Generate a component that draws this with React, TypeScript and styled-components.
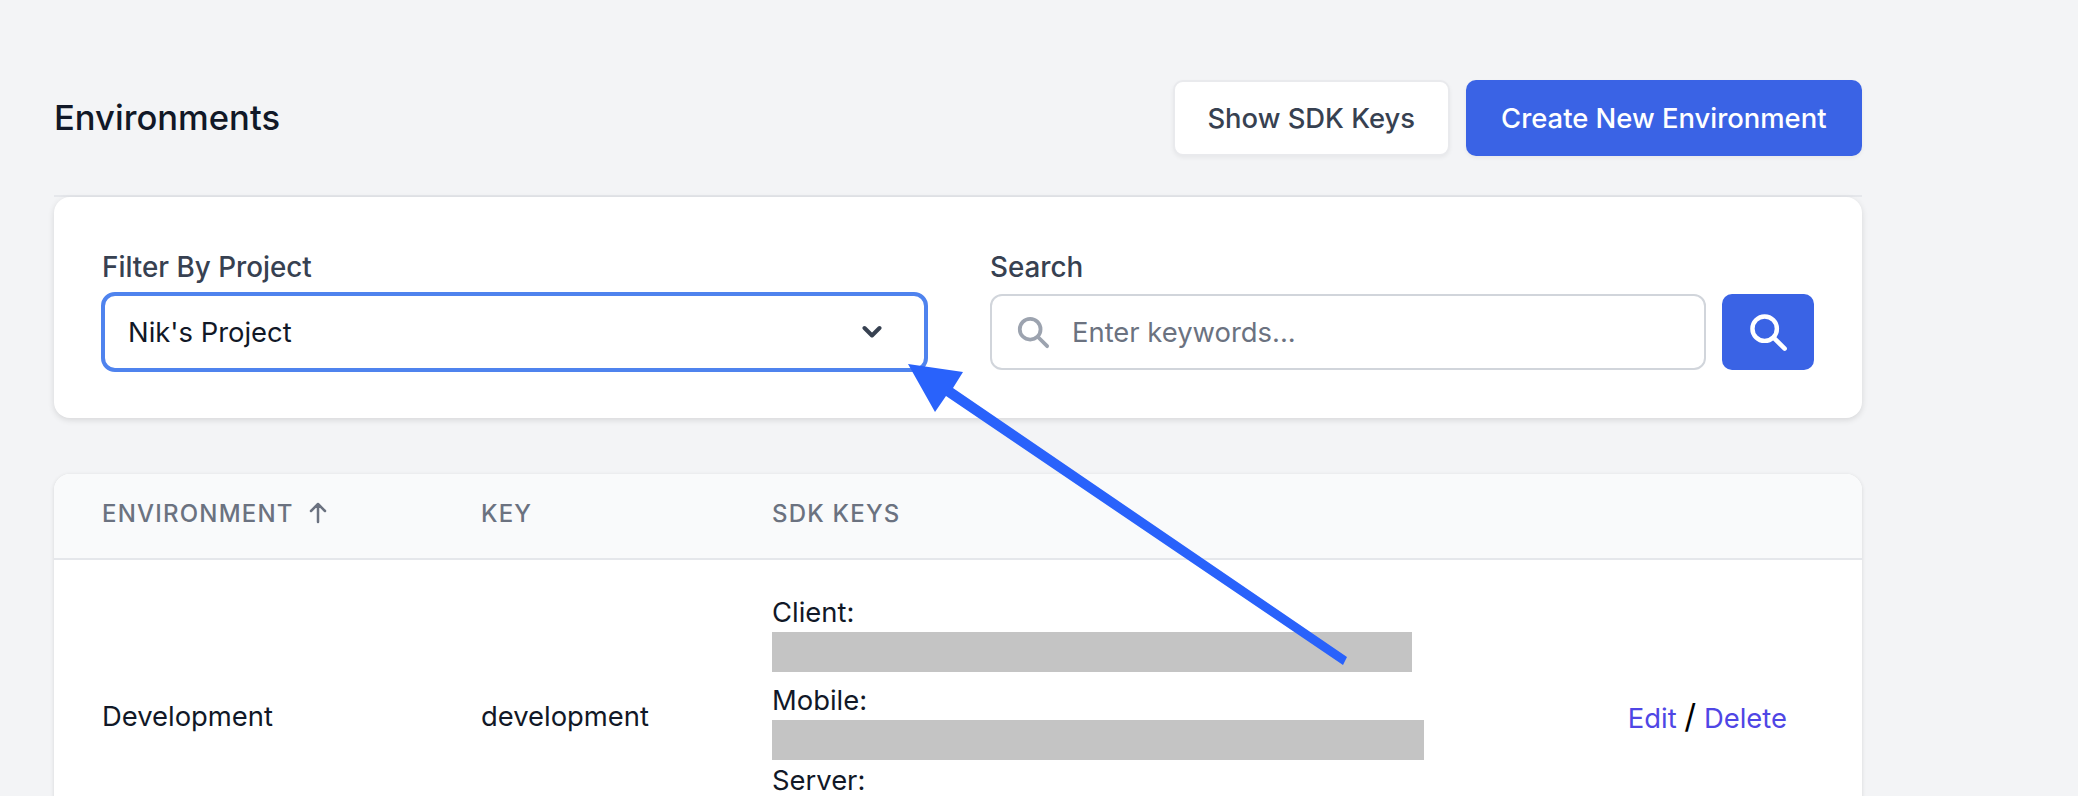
import React from "react";
import styled, { createGlobalStyle } from "styled-components";

const Global = createGlobalStyle`
  html, body { margin: 0; padding: 0; height: 796px; overflow: hidden; background: #f3f4f6; }
  body { font-family: Inter, "Liberation Sans", sans-serif; color: #111827; }
  * { box-sizing: border-box; }
`;

const Page = styled.main`
  width: 1808px;
  margin-left: 54px;
`;

const Header = styled.header`
  display: flex;
  align-items: center;
  justify-content: space-between;
  padding: 80px 0 39px;
  border-bottom: 2px solid #e5e7eb;
`;

const Title = styled.h1`
  margin: -2px 0 0;
  font-size: 34.6px;
  line-height: 76px;
  font-weight: 500;
  color: #111827;
`;

const Actions = styled.div`
  display: flex;
  gap: 16px;
`;

const Button = styled.button<{ $primary?: boolean }>`
  height: 76px;
  padding: 0 ${(p) => (p.$primary ? 35.5 : 32.5)}px;
  border-radius: 10px;
  font: 500 27.4px Inter, sans-serif;
  cursor: pointer;
  color: ${(p) => (p.$primary ? "#ffffff" : "#374151")};
  background: ${(p) => (p.$primary ? "#3a63e5" : "#ffffff")};
  border: ${(p) => (p.$primary ? "none" : "2px solid #e9eaed")};
  box-shadow: 0 2px 4px rgba(0, 0, 0, 0.05);
`;

const FilterCard = styled.section`
  display: grid;
  grid-template-columns: 824px 824px;
  column-gap: 64px;
  height: 221px;
  padding: 50px 48px 0;
  background: #fff;
  border-radius: 16px;
  box-shadow: 0 2px 6px rgba(0, 0, 0, 0.12);
`;

const Field = styled.div`
  display: flex;
  flex-direction: column;
`;

const Label = styled.label`
  font-size: 27.8px;
  line-height: 40px;
  font-weight: 500;
  color: #374151;
  margin-bottom: 7px;
`;

const Select = styled.div`
  display: flex;
  align-items: center;
  justify-content: space-between;
  height: 80px;
  margin: -2px -2px 0 -1px;
  padding: 0 42px 0 23px;
  border: 4px solid #4f83ee;
  border-radius: 14px;
  font-size: 27.4px;
  color: #111827;
`;

const SearchRow = styled.div`
  display: flex;
  gap: 16px;
`;

const SearchBox = styled.div`
  display: flex;
  align-items: center;
  gap: 20px;
  width: 716px;
  height: 76px;
  padding: 0 24px;
  border: 2px solid #d1d5db;
  border-radius: 12px;
  color: #9ca3af;
`;

const SearchInput = styled.input`
  flex: 1;
  min-width: 0;
  border: 0;
  outline: 0;
  font: 400 27.4px Inter, sans-serif;
  color: #111827;
  &::placeholder { color: #6b7280; opacity: 1; }
`;

const SearchButton = styled.button`
  display: flex;
  align-items: center;
  justify-content: center;
  width: 92px;
  height: 76px;
  border: 0;
  border-radius: 10px;
  background: #3a63e5;
  color: #fff;
`;

const TableCard = styled.section`
  margin-top: 56px;
  background: #fff;
  border-radius: 16px 16px 0 0;
  overflow: hidden;
  box-shadow: 0 1px 4px rgba(0, 0, 0, 0.12);
`;

const Table = styled.table`
  width: 100%;
  border-collapse: collapse;
  table-layout: fixed;
`;

const HeadRow = styled.tr`
  height: 85px;
  background: #f9fafb;
  border-bottom: 2px solid #e5e7eb;
`;

const Th = styled.th<{ $width?: number }>`
  width: ${(p) => (p.$width ? `${p.$width}px` : "auto")};
  padding: 0 0 6px 48px;
  text-align: left;
  font-size: 24px;
  font-weight: 500;
  letter-spacing: 1.2px;
  color: #6b7280;
`;

const SortArrow = styled.span`
  display: inline-flex;
  margin-left: 14px;
  vertical-align: -2px;
`;

const Td = styled.td`
  padding: 32px 0 32px 48px;
  font-size: 27.4px;
  line-height: 40px;
  color: #111827;
  vertical-align: middle;
`;

const KeyLine = styled.div<{ $spaced?: boolean }>`
  margin-top: ${(p) => (p.$spaced ? 8 : 0)}px;
`;

const Redacted = styled.div<{ $width: number }>`
  width: ${(p) => p.$width}px;
  height: 40px;
  background: #c4c4c4;
`;

const ActionCell = styled.td`
  padding: 2px 75px 0 0;
  text-align: right;
  font-size: 27.4px;
  color: #000;
`;

const Slash = styled.span`
  font-size: 33px;
  font-weight: 400;
  line-height: 1;
`;

const LinkText = styled.a`
  color: #4f46e5;
  text-decoration: none;
`;

const Annotation = styled.svg`
  position: fixed;
  left: 0;
  top: 0;
  pointer-events: none;
`;

const SearchIcon = ({ size, stroke }: { size: number; stroke: number }) => (
  <svg width={size} height={size} viewBox="0 0 36 36" fill="none" stroke="currentColor" strokeWidth={stroke} strokeLinecap="round">
    <circle cx="15" cy="15" r="11" />
    <path d="M23 23L33 33" />
  </svg>
);

export default function App() {
  return (
    <>
      <Global />
      <Page>
        <Header>
          <Title>Environments</Title>
          <Actions>
            <Button>Show SDK Keys</Button>
            <Button $primary>Create New Environment</Button>
          </Actions>
        </Header>
        <FilterCard>
          <Field>
            <Label>Filter By Project</Label>
            <Select>
              <span>Nik's Project</span>
              <svg width="20" height="14" viewBox="0 0 20 14" fill="none" stroke="#374151" strokeWidth="4" strokeLinecap="round" strokeLinejoin="round">
                <path d="M2.500 3l7.500 7.500L17.500 3" />
              </svg>
            </Select>
          </Field>
          <Field>
            <Label>Search</Label>
            <SearchRow>
              <SearchBox>
                <SearchIcon size={34} stroke={4} />
                <SearchInput placeholder="Enter keywords..." />
              </SearchBox>
              <SearchButton>
                <SearchIcon size={40} stroke={4} />
              </SearchButton>
            </SearchRow>
          </Field>
        </FilterCard>
        <TableCard>
          <Table>
            <thead>
              <HeadRow>
                <Th $width={379}>
                  ENVIRONMENT
                  <SortArrow>
                    <svg width="20" height="22" viewBox="0 0 20 22" fill="none" stroke="#6b7280" strokeWidth="2.5" strokeLinecap="round" strokeLinejoin="round">
                      <path d="M10 20V2M3 9l7-7 7 7" />
                    </svg>
                  </SortArrow>
                </Th>
                <Th $width={291}>KEY</Th>
                <Th>SDK KEYS</Th>
                <Th $width={300} />
              </HeadRow>
            </thead>
            <tbody>
              <tr>
                <Td>Development</Td>
                <Td>development</Td>
                <Td>
                  <KeyLine>Client:</KeyLine>
                  <Redacted $width={640} />
                  <KeyLine $spaced>Mobile:</KeyLine>
                  <Redacted $width={652} />
                  <KeyLine>Server:</KeyLine>
                  <Redacted $width={640} />
                </Td>
                <ActionCell>
                  <LinkText href="#">Edit</LinkText> <Slash>/</Slash> <LinkText href="#">Delete</LinkText>
                </ActionCell>
              </tr>
            </tbody>
          </Table>
        </TableCard>
      </Page>
      <Annotation width="2078" height="796" viewBox="0 0 2078 796">
        <polygon fill="#2962fb" points="1347,657 1343,665 946,396 935,412 908,364 963,372 953,388" />
      </Annotation>
    </>
  );
}
